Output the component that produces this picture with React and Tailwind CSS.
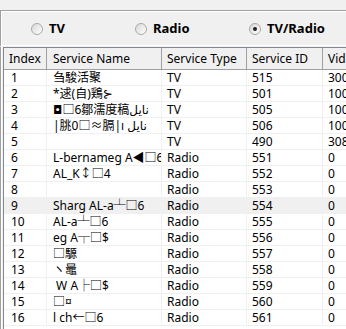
import React from 'react';

const rows = [
  ['1', '刍駿活聚', 'TV', '515', '300'],
  ['2', '*逑(自)鶏⊱', 'TV', '501', '100'],
  ['3', '◘□6鄒濡度稿نايل', 'TV', '505', '100'],
  ['4', '|朓0□≈膈|ı نايل', 'TV', '506', '100'],
  ['5', '', 'TV', '490', '308'],
  ['6', 'L-bernameg A◀□6', 'Radio', '551', '0'],
  ['7', 'AL_K↕□4', 'Radio', '552', '0'],
  ['8', '', 'Radio', '553', '0'],
  ['9', 'Sharg AL-a┴□6', 'Radio', '554', '0'],
  ['10', 'AL-a┴□6', 'Radio', '555', '0'],
  ['11', 'eg A┬□$', 'Radio', '556', '0'],
  ['12', '□騵', 'Radio', '557', '0'],
  ['13', 'ヽ鼂', 'Radio', '558', '0'],
  ['14', ' W A├□$', 'Radio', '559', '0'],
  ['15', '□¤', 'Radio', '560', '0'],
  ['16', 'l ch←□6', 'Radio', '561', '0'],
];

const cols = ['w-[43px] pl-[7px]', 'w-[115px] pl-[6px]', 'w-[85px] pl-[5px]', 'w-[76px] pl-[5px]', 'flex-1 pl-[5px]'];
const heads = ['Index', 'Service Name', 'Service Type', 'Service ID', 'Vid'];

const Radio = ({ label, checked }) => (
  <div className="flex items-center gap-[6px]">
    <div className="w-[12px] h-[12px] rounded-full border border-[#a8a8a8] bg-gradient-to-br from-[#d8d8d8] to-white flex items-center justify-center">
      {checked && <div className="w-[4px] h-[4px] rounded-full bg-[#222]" />}
    </div>
    <span className="font-bold text-[13px] text-black">{label}</span>
  </div>
);

export default function App() {
  return (
    <div
      className="w-[346px] h-[329px] bg-[#f0f0f0] overflow-hidden flex flex-col"
      style={{ fontFamily: '"Noto Sans", "Noto Sans CJK SC", "DejaVu Sans", sans-serif' }}
    >
      <div className="h-[10px] shrink-0" />
      <div className="h-[36px] shrink-0 border-t border-l border-[#a0a0a0]">
        <div className="h-full border-t border-l border-b border-white flex items-center pl-[29px]">
          <div className="w-[104px]">
            <Radio label="TV" />
          </div>
          <div className="w-[114px]">
            <Radio label="Radio" />
          </div>
          <Radio label="TV/Radio" checked />
        </div>
      </div>
      <div className="h-[1px] shrink-0" />
      <div className="flex-1 flex border-l border-[#a0a0a0]">
        <div className="w-[2px] bg-[#f0f0f0] border-l border-white shrink-0" />
        <div className="flex-1 bg-white border-t border-l border-[#828790] text-[12px] text-black leading-none">
          <div className="flex h-[22px] bg-[#f0f0f0] border-b border-[#a0a0a0]">
            {heads.map((h, i) => (
              <div
                key={h}
                className={`${i === 0 ? 'w-[43px] pl-[5px]' : cols[i]} shrink-0 flex items-center border-r border-[#a0a0a0] whitespace-nowrap overflow-hidden`}
              >
                {h}
              </div>
            ))}
          </div>
          {rows.map((r) => (
            <div
              key={r[0]}
              className={`flex h-[16px] border-b border-[#f0f0f0] ${r[0] === '9' ? 'bg-[#f0f0f0]' : ''}`}
            >
              {r.map((c, i) => (
                <div
                  key={i}
                  className={`${cols[i]} shrink-0 flex items-center border-r border-[#f0f0f0] whitespace-pre overflow-hidden`}
                >
                  {c}
                </div>
              ))}
            </div>
          ))}
        </div>
      </div>
    </div>
  );
}
